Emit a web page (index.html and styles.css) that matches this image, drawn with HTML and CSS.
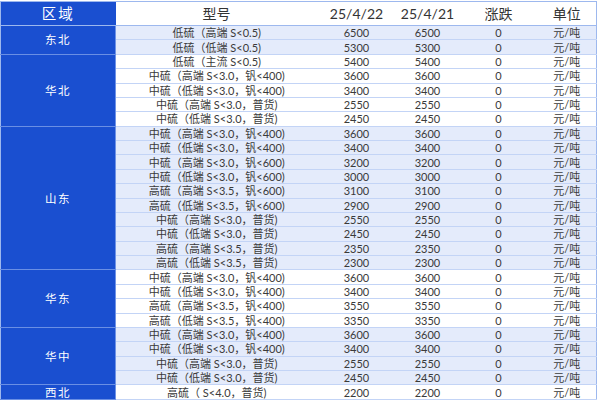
FILE: index.html
```html
<!DOCTYPE html>
<html lang="zh-CN">
<head>
<meta charset="utf-8">
<title>价格表</title>
<link rel="stylesheet" href="styles.css">
</head>
<body>
<table class="price">
<colgroup>
<col class="c-region"><col class="c-model"><col class="c-d1"><col class="c-d2"><col class="c-chg"><col class="c-unit">
</colgroup>
<thead>
<tr class="head">
<th class="region-h">区域</th><th>型号</th><th>25/4/22</th><th>25/4/21</th><th>涨跌</th><th>单位</th>
</tr>
</thead>
<tbody class="g-blue">
<tr><td class="region" rowspan="2">东北</td><td>低硫（高端 S&lt;0.5)</td><td>6500</td><td>6500</td><td>0</td><td>元/吨</td></tr>
<tr><td>低硫（低端 S&lt;0.5)</td><td>5300</td><td>5300</td><td>0</td><td>元/吨</td></tr>
</tbody>
<tbody class="g-white">
<tr><td class="region" rowspan="5">华北</td><td>低硫（主流 S&lt;0.5)</td><td>5400</td><td>5400</td><td>0</td><td>元/吨</td></tr>
<tr><td>中硫（高端 S&lt;3.0，钒&lt;400)</td><td>3600</td><td>3600</td><td>0</td><td>元/吨</td></tr>
<tr><td>中硫（低端 S&lt;3.0，钒&lt;400)</td><td>3400</td><td>3400</td><td>0</td><td>元/吨</td></tr>
<tr><td>中硫（高端 S&lt;3.0，普货)</td><td>2550</td><td>2550</td><td>0</td><td>元/吨</td></tr>
<tr><td>中硫（低端 S&lt;3.0，普货)</td><td>2450</td><td>2450</td><td>0</td><td>元/吨</td></tr>
</tbody>
<tbody class="g-blue">
<tr><td class="region" rowspan="10">山东</td><td>中硫（高端 S&lt;3.0，钒&lt;400)</td><td>3600</td><td>3600</td><td>0</td><td>元/吨</td></tr>
<tr><td>中硫（低端 S&lt;3.0，钒&lt;400)</td><td>3400</td><td>3400</td><td>0</td><td>元/吨</td></tr>
<tr><td>中硫（高端 S&lt;3.0，钒&lt;600)</td><td>3200</td><td>3200</td><td>0</td><td>元/吨</td></tr>
<tr><td>中硫（低端 S&lt;3.0，钒&lt;600)</td><td>3000</td><td>3000</td><td>0</td><td>元/吨</td></tr>
<tr><td>高硫（高端 S&lt;3.5，钒&lt;600)</td><td>3100</td><td>3100</td><td>0</td><td>元/吨</td></tr>
<tr><td>高硫（低端 S&lt;3.5，钒&lt;600)</td><td>2900</td><td>2900</td><td>0</td><td>元/吨</td></tr>
<tr><td>中硫（高端 S&lt;3.0，普货)</td><td>2550</td><td>2550</td><td>0</td><td>元/吨</td></tr>
<tr><td>中硫（低端 S&lt;3.0，普货)</td><td>2450</td><td>2450</td><td>0</td><td>元/吨</td></tr>
<tr><td>高硫（高端 S&lt;3.5，普货)</td><td>2350</td><td>2350</td><td>0</td><td>元/吨</td></tr>
<tr><td>高硫（低端 S&lt;3.5，普货)</td><td>2300</td><td>2300</td><td>0</td><td>元/吨</td></tr>
</tbody>
<tbody class="g-white">
<tr><td class="region" rowspan="4">华东</td><td>中硫（高端 S&lt;3.0，钒&lt;400)</td><td>3600</td><td>3600</td><td>0</td><td>元/吨</td></tr>
<tr><td>中硫（低端 S&lt;3.0，钒&lt;400)</td><td>3400</td><td>3400</td><td>0</td><td>元/吨</td></tr>
<tr><td>高硫（高端 S&lt;3.5，钒&lt;400)</td><td>3550</td><td>3550</td><td>0</td><td>元/吨</td></tr>
<tr><td>高硫（低端 S&lt;3.5，钒&lt;400)</td><td>3350</td><td>3350</td><td>0</td><td>元/吨</td></tr>
</tbody>
<tbody class="g-blue">
<tr><td class="region" rowspan="4">华中</td><td>中硫（高端 S&lt;3.0，钒&lt;400)</td><td>3600</td><td>3600</td><td>0</td><td>元/吨</td></tr>
<tr><td>中硫（低端 S&lt;3.0，钒&lt;400)</td><td>3400</td><td>3400</td><td>0</td><td>元/吨</td></tr>
<tr><td>中硫（高端 S&lt;3.0，普货)</td><td>2550</td><td>2550</td><td>0</td><td>元/吨</td></tr>
<tr><td>中硫（低端 S&lt;3.0，普货)</td><td>2450</td><td>2450</td><td>0</td><td>元/吨</td></tr>
</tbody>
<tbody class="g-white">
<tr><td class="region">西北</td><td>高硫（ S&lt;4.0，普货)</td><td>2200</td><td>2200</td><td>0</td><td>元/吨</td></tr>
</tbody>
</table>
</body>
</html>
```
FILE: styles.css
```css
html, body {
  margin: 0;
  padding: 0;
  background: #ffffff;
}
body {
  padding-top: 1px;
  font-family: Lato, "Noto Sans CJK SC", sans-serif;
  color: #3a3a3a;
}
.price {
  width: 596px;
  table-layout: fixed;
  border-collapse: collapse;
  border: 1px solid #9db8ee;
}
.c-region { width: 115px; }
.c-model { width: 202px; }
.c-d1 { width: 78px; }
.c-d2 { width: 64px; }
.c-chg { width: 78px; }
.c-unit { width: 59px; }

.head th {
  height: 23px;
  padding: 0;
  font-weight: normal;
  font-size: 14px;
  color: #333333;
  background: #ffffff;
  text-align: center;
  border-bottom: 1px solid #9db8ee;
  line-height: 23px;
}
.head th.region-h {
  background: #1a4fd0;
  color: #ffffff;
  font-size: 14.5px;
  letter-spacing: 2px;
}
td {
  height: 13.38px;
  padding: 0;
  font-size: 11px;
  line-height: 13px;
  text-align: center;
  white-space: nowrap;
  border-bottom: 1px solid #c3d4f6;
  overflow: hidden;
}
.g-blue td { background: #e4ebfb; }
.g-white td { background: #ffffff; }
td.region,
.g-blue td.region,
.g-white td.region {
  background: #1a4fd0;
  color: #ffffff;
  font-size: 11.5px;
  letter-spacing: 1.5px;
  border-right: 1px solid #6f93e6;
  border-bottom: 1px solid #6a8fe4;
}
```
